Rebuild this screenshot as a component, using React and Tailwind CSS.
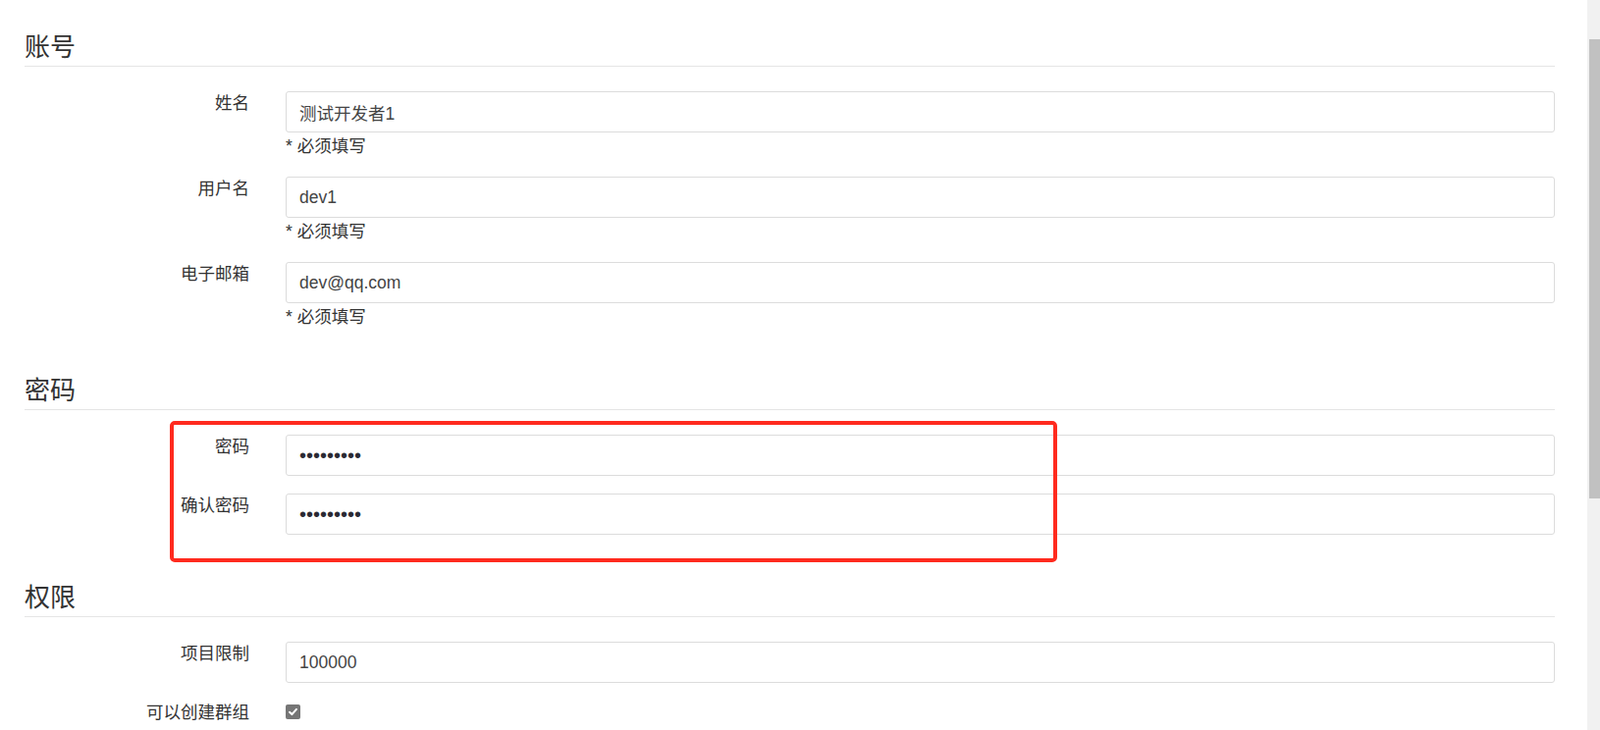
import React from 'react';

const accountRows = [
  { label: '姓名', value: '测试开发者1', help: true },
  { label: '用户名', value: 'dev1', help: true },
  { label: '电子邮箱', value: 'dev@qq.com', help: true },
];

// legend 的上边距会和上一行的 mb 折叠，所以这里给 44
const Legend = ({ children, top = 'mt-[44px]' }) => (
  <div className={`${top} mb-[25px] border-b border-[#e5e5e5] text-[26px] leading-[37px] text-[#333]`}>
    {children}
  </div>
);

const FieldRow = ({ label, value, help = false, type = 'text' }) => (
  <div className="flex mb-[18px]">
    <label className="w-[229px] shrink-0 text-right leading-[25px] text-[#333]">{label}</label>
    <div className="flex-1 ml-[37px]">
      <input
        type={type}
        value={value}
        readOnly
        className={`w-full h-[42px] pl-[13px] pr-3 border border-[#dcdcdc] rounded-[3px] bg-white outline-none ${
          type === 'password' ? 'text-[20px] tracking-[0px] text-[#2a2a33]' : 'text-[#444]'
        }`}
      />
      {help && <div className="mt-[2px] leading-[25px] text-[#333]">* 必须填写</div>}
    </div>
  </div>
);

const CheckRow = ({ label }) => (
  <div className="flex mb-[18px]">
    <label className="w-[229px] shrink-0 text-right leading-[25px] text-[#333]">{label}</label>
    <div className="flex-1 ml-[37px] pt-[4px]">
      <span className="flex items-center justify-center w-[15px] h-[15px] rounded-[2px] bg-[#767676]">
        <svg viewBox="0 0 12 12" className="w-[11px] h-[11px]">
          <path d="M2.2 6.3 L4.8 8.8 L9.8 3.2" fill="none" stroke="#fff" strokeWidth="2.2" strokeLinecap="round" strokeLinejoin="round" />
        </svg>
      </span>
    </div>
  </div>
);

export default function App() {
  return (
    <div className="relative flex h-[744px] overflow-hidden bg-white font-['Liberation_Sans','Noto_Sans_CJK_SC',sans-serif] text-[17.5px]">
      <main className="flex-1 pl-[25px] pr-[33px]">
        {/* 账号 */}
        <Legend top="mt-[30px]">账号</Legend>
        {accountRows.map((row) => (
          <FieldRow key={row.label} {...row} />
        ))}

        {/* 密码 */}
        <Legend>密码</Legend>
        <FieldRow label="密码" value="123456789" type="password" />
        <FieldRow label="确认密码" value="123456789" type="password" />

        {/* 权限 */}
        <Legend top="mt-[46px]">权限</Legend>
        <FieldRow label="项目限制" value="100000" />
        <CheckRow label="可以创建群组" />
      </main>

      {/* scrollbar */}
      <aside className="w-[13px] shrink-0 bg-[#f1f1f1]">
        <div className="ml-[2px] mt-[40px] h-[468px] bg-[#c1c1c1]" />
      </aside>

      {/* annotation box */}
      <div className="absolute left-[173px] top-[429px] w-[904px] h-[144px] border-[4px] border-[#ff2a1e] rounded-[5px] pointer-events-none" />
    </div>
  );
}
